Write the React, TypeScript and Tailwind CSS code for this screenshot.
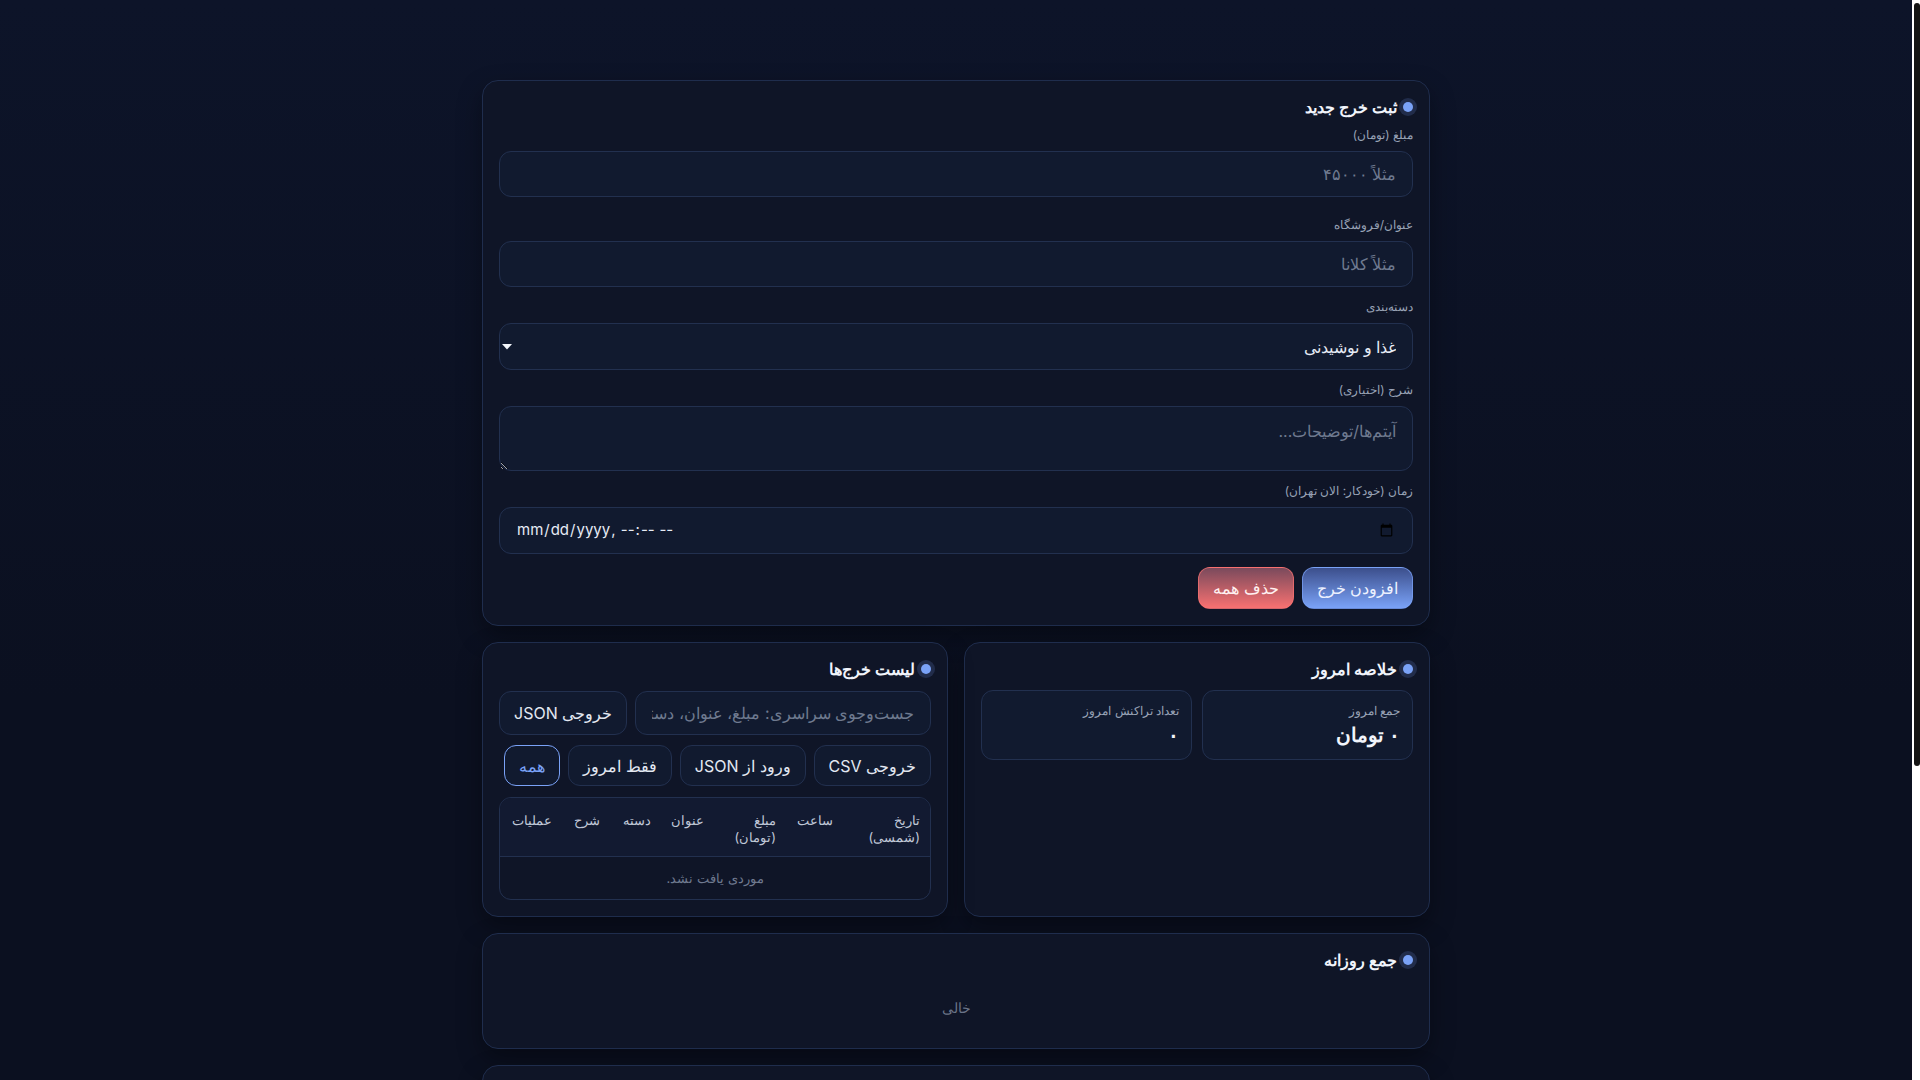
import React, { useState } from 'react'

const Dot = () => (
  <span className="inline-block w-2.5 h-2.5 shrink-0 rounded-full bg-[#7aa2f7] shadow-[0_0_0_4px_rgba(122,162,247,0.17)]" />
)

const CardTitle = ({ children, className = '' }: { children: React.ReactNode; className?: string }) => (
  <div className={`flex items-center gap-1.5 ${className}`}>
    <Dot />
    <h2 className="text-base leading-5 font-bold text-[#f1f4fb]">{children}</h2>
  </div>
)

const Card = ({ children, className = '' }: { children: React.ReactNode; className?: string }) => (
  <section
    className={`rounded-2xl border border-[#1f2d4d] bg-[#0f1527] px-4 pt-4 pb-4 shadow-[0_10px_24px_rgba(0,0,0,0.35)] ${className}`}
  >
    {children}
  </section>
)

const labelCls = 'block text-xs leading-4 text-[#98a2b6] mb-2'
const fieldCls =
  'w-full rounded-xl border border-[#22304f] bg-[#111a2f] px-4 text-base text-[#e6ebf5] placeholder:text-[#6f7a90] outline-none'
const btnCls =
  'rounded-xl border border-[#22304f] bg-[#111a2f] px-3.5 text-base text-[#e3e8f2] whitespace-nowrap cursor-pointer'
const thCls = 'align-top px-2.5 pt-3.5 pb-2.5 text-right text-[13px] leading-[17px] font-normal text-[#c0c8d8]'

const categories = ['غذا و نوشیدنی', 'حمل و نقل', 'خرید', 'قبوض', 'سلامت', 'تفریح', 'سایر']

// page-level scrollbar, drawn the way the custom one looks
const PageScrollbar = () => (
  <div aria-hidden className="fixed right-0 top-0 z-50 h-screen w-2 bg-white">
    <div className="mt-[3px] ml-[2px] h-[763px] w-[6px] rounded-full bg-[#141414]" />
  </div>
)

export default function App() {
  const [amount, setAmount] = useState('')
  const [title, setTitle] = useState('')
  const [category, setCategory] = useState(categories[0])
  const [note, setNote] = useState('')
  const [when, setWhen] = useState('')
  const [query, setQuery] = useState('')
  const [filter, setFilter] = useState<'all' | 'today'>('all')

  return (
    <div
      dir="rtl"
      className="min-h-screen bg-[#0b1020] bg-[linear-gradient(180deg,#0d1429_0px,#0b1020_700px)] pt-20 pb-20 pr-2 [font-family:Inter,'Noto_Sans',sans-serif]"
    >
      <PageScrollbar />
      <main className="mx-auto w-[948px] flex flex-col gap-4">
        {/* ثبت خرج */}
        <Card>
          <CardTitle className="mb-2.5">ثبت خرج جدید</CardTitle>

          <div className="mb-5">
            <label className={labelCls}>مبلغ (تومان)</label>
            <input
              className={`${fieldCls} h-[46px]`}
              placeholder="مثلاً ۴۵۰۰۰"
              value={amount}
              onChange={e => setAmount(e.target.value)}
            />
          </div>

          <div className="mb-3">
            <label className={labelCls}>عنوان/فروشگاه</label>
            <input
              className={`${fieldCls} h-[46px]`}
              placeholder="مثلاً کلانا"
              value={title}
              onChange={e => setTitle(e.target.value)}
            />
          </div>

          <div className="mb-3">
            <label className={labelCls}>دسته‌بندی</label>
            <div className="relative">
              <select
                className={`${fieldCls} h-[47px] appearance-none`}
                value={category}
                onChange={e => setCategory(e.target.value)}
              >
                {categories.map(c => (
                  <option key={c} value={c}>
                    {c}
                  </option>
                ))}
              </select>
              <svg
                className="pointer-events-none absolute left-[3px] top-1/2 -translate-y-1/2"
                width="10"
                height="6"
                viewBox="0 0 10 6"
              >
                <path d="M0 0h10L5 5.5z" fill="#f4f6fb" />
              </svg>
            </div>
          </div>

          <div className="mb-3">
            <label className={labelCls}>شرح (اختیاری)</label>
            <textarea
              className={`${fieldCls} block h-[65px] py-3 leading-6 resize-y`}
              placeholder="آیتم‌ها/توضیحات..."
              value={note}
              onChange={e => setNote(e.target.value)}
            />
          </div>

          <div>
            <label className={labelCls}>زمان (خودکار: الان تهران)</label>
            <input
              type="datetime-local"
              dir="ltr"
              className={`${fieldCls} h-[47px] text-[15px]`}
              value={when}
              onChange={e => setWhen(e.target.value)}
            />
          </div>

          <div className="mt-[13px] flex gap-2">
            <button className="h-[42px] rounded-xl border border-[#7aa2f7]/70 bg-[linear-gradient(180deg,#3c4f8c,#7aa2f7)] px-[14px] text-base text-[#eef2ff] cursor-pointer">
              افزودن خرج
            </button>
            <button className="h-[42px] rounded-xl border border-[#f87171]/70 bg-[linear-gradient(180deg,#7a4a5c,#f87171)] px-[14px] text-base text-[#fff1f1] cursor-pointer">
              حذف همه
            </button>
          </div>
        </Card>

        <div className="grid grid-cols-2 gap-4">
          {/* خلاصه امروز */}
          <Card>
            <CardTitle className="mb-[11px]">خلاصه امروز</CardTitle>
            <div className="grid grid-cols-2 gap-2.5">
              <div className="rounded-xl border border-[#22304f] bg-[#111a2f] px-3 pt-3 pb-2.5">
                <div className="text-xs leading-4 text-[#98a2b6]">جمع امروز</div>
                <div className="mt-0.5 text-xl leading-7 font-bold text-[#f1f4fb]">۰ تومان</div>
              </div>
              <div className="rounded-xl border border-[#22304f] bg-[#111a2f] px-3 pt-3 pb-2.5">
                <div className="text-xs leading-4 text-[#98a2b6]">تعداد تراکنش امروز</div>
                <div className="mt-0.5 text-xl leading-7 font-bold text-[#f1f4fb]">۰</div>
              </div>
            </div>
          </Card>

          {/* لیست خرج‌ها */}
          <Card>
            <CardTitle className="mb-3">لیست خرج‌ها</CardTitle>
            <div className="flex gap-2">
              <input
                className={`${fieldCls} h-[44px] flex-1 min-w-0`}
                placeholder="جست‌وجوی سراسری: مبلغ، عنوان، دسته‌بندی، شرح"
                value={query}
                onChange={e => setQuery(e.target.value)}
              />
              <button className={`${btnCls} h-[44px]`}>خروجی JSON</button>
            </div>
            <div className="mt-2.5 flex flex-wrap gap-2">
              <button className={`${btnCls} h-[41px]`}>خروجی CSV</button>
              <button className={`${btnCls} h-[41px]`}>ورود از JSON</button>
              <button
                className={`${btnCls} h-[41px] ${filter === 'today' ? '!border-[#7aa2f7] !text-[#7aa2f7]' : ''}`}
                onClick={() => setFilter('today')}
              >
                فقط امروز
              </button>
              <button
                className={`${btnCls} h-[41px] ${filter === 'all' ? '!border-[#7aa2f7] !text-[#7aa2f7]' : ''}`}
                onClick={() => setFilter('all')}
              >
                همه
              </button>
            </div>

            <div className="mt-[11px] overflow-hidden rounded-xl border border-[#22304f]">
              <table className="w-full table-fixed border-collapse">
                <thead className="bg-[#121a31]">
                  <tr className="border-b border-[#22304f]">
                    <th className={`${thCls} w-[87px]`}>تاریخ (شمسی)</th>
                    <th className={`${thCls} w-[57px] whitespace-nowrap`}>ساعت</th>
                    <th className={`${thCls} w-[72px]`}>مبلغ (تومان)</th>
                    <th className={`${thCls} w-[53px] whitespace-nowrap`}>عنوان</th>
                    <th className={`${thCls} w-[51px] whitespace-nowrap`}>دسته</th>
                    <th className={`${thCls} w-[48px] whitespace-nowrap`}>شرح</th>
                    <th className={`${thCls} whitespace-nowrap`}>عملیات</th>
                  </tr>
                </thead>
                <tbody>
                  <tr>
                    <td colSpan={7} className="py-[11px] text-center text-[13px] leading-5 text-[#6f7a90]">
                      موردی یافت نشد.
                    </td>
                  </tr>
                </tbody>
              </table>
            </div>
          </Card>
        </div>

        {/* جمع روزانه */}
        <Card>
          <CardTitle>جمع روزانه</CardTitle>
          <div className="pt-7 pb-3.5 text-center text-sm leading-5 text-[#6b7488]">خالی</div>
        </Card>

        {/* جمع بر اساس دسته */}
        <Card>
          <CardTitle>جمع بر اساس دسته‌بندی</CardTitle>
          <div className="flex h-[330px] items-center justify-center text-sm text-[#6b7488]">خالی</div>
        </Card>
      </main>
    </div>
  )
}
